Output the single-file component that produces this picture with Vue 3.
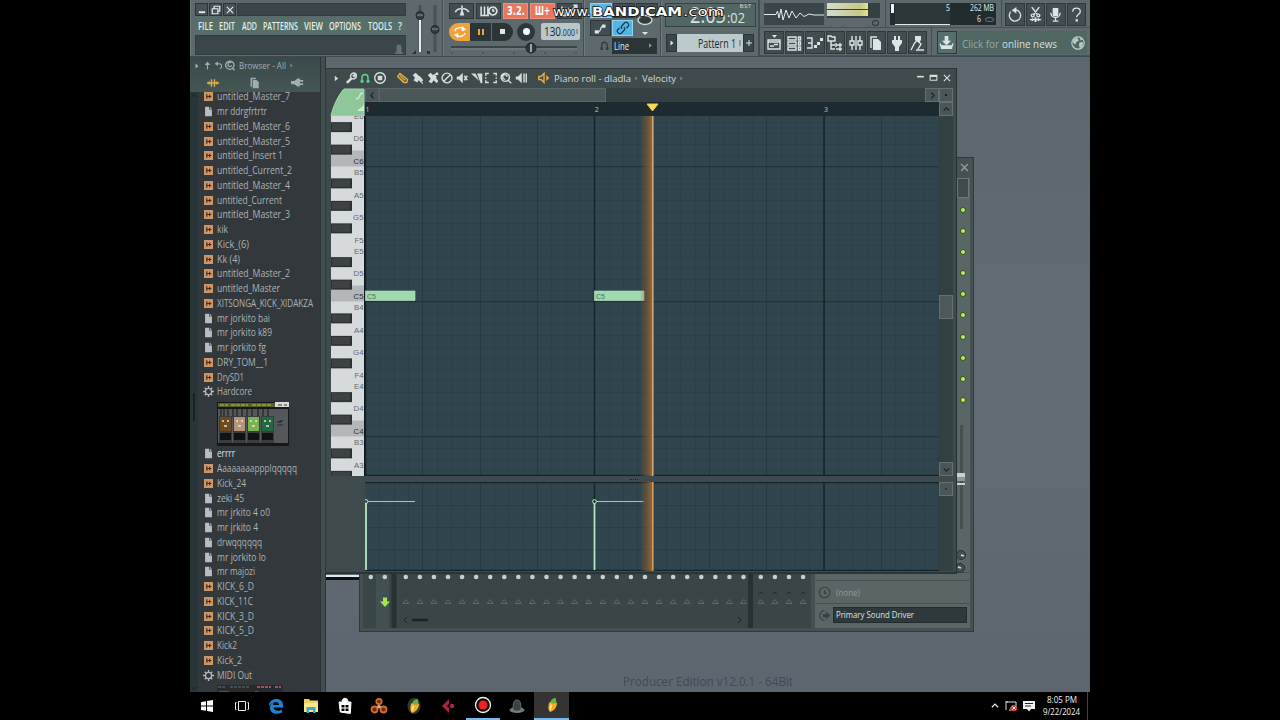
<template>
  <div class="stage">
    <div class="screen">
      <header class="toolbar">
        <section class="group menu-group">
          <div class="menu-box">
            <div class="title-row">
              <button v-for="n in ['min', 'restore', 'close']" :key="n" class="win-btn">
                <Icon :name="n" :size="10" />
              </button>
              <div class="title-fill"></div>
            </div>
            <nav class="menu">
              <Fit v-for="m in menus" :key="m.t" :text="m.t" :w="m.w" :h="14" class="menu-text" />
            </nav>
            <div class="hint"><Icon name="bin" :size="10" /></div>
          </div>
          <svg class="faders" width="30" height="57">
            <path d="M10 5V52M25 5V52" stroke="#465254" stroke-width="3" />
            <path d="M10 18V52" stroke="#e4eeee" stroke-width="2" />
            <g fill="#343d40" stroke="#20282a">
              <circle cx="10" cy="15.500" r="4" />
              <circle cx="25" cy="29.500" r="4" />
            </g>
            <path d="M7 15h6M22 29h6" stroke="#8b9697" />
            <path d="M2 54l4-4v4zM17 51h3v3h-3z" fill="#2b3537" />
          </svg>
        </section>

        <section class="group transport">
          <div class="row top">
            <div class="tb"><Icon name="metronome" :size="18" /></div>
            <div class="tb"><Icon name="wait" :size="18" /></div>
            <div class="tb red"><Fit text="3.2." :w="18" :h="14" class="seg" /></div>
            <div class="tb red"><Fit text="Ш+" :w="15" :h="14" class="seg" /></div>
            <div class="tb"><Icon name="steps" :size="18" /></div>
          </div>
          <div class="row play">
            <div class="mode"><Icon name="loop" :size="14" /></div>
            <div class="pause"><i></i><i></i></div>
            <div class="stop"><i></i></div>
            <div class="rec"><i></i></div>
            <div class="tempo">
              <Fit text="130" :w="17" :h="17" class="tempo-big" />
              <Fit text=".000" :w="14" :h="17" class="tempo-small" />
              <b></b>
            </div>
          </div>
          <svg width="132" height="14" class="pitch">
            <path d="M2 5H128" stroke="#38464a" stroke-width="2" />
            <path d="M2 7H128" stroke="#78888a" />
            <path d="M3 10v2M34 10v2M65 10v2M96 10v2M127 10v2" stroke="#3c494d" />
            <circle cx="82" cy="6" r="5" fill="#2c3639" stroke="#1d2527" />
            <path d="M82 2V10" stroke="#9aa7a9" stroke-width="2" />
          </svg>
        </section>

        <section class="group tools">
          <div class="row top">
            <div class="tb blue"></div>
            <div class="tb"></div>
            <div class="tb"></div>
          </div>
          <div class="row mid">
            <div class="tb"><Icon name="slide" :size="13" /></div>
            <div class="tb blue"><Icon name="link" :size="14" /></div>
            <svg width="22" height="22" class="knob">
              <ellipse cx="11" cy="3" rx="7" ry="4.500" fill="#313b3e" stroke="#c9d4d4" stroke-width="1.500" />
              <path d="M8 15h6l-3 3z" fill="#dfe7e7" />
            </svg>
          </div>
          <div class="row snap">
            <Icon name="magnet" :size="11" class="dim" />
            <div class="select">
              <Fit text="Line" :w="15" :h="14" class="select-text" />
              <Icon name="right" :size="7" class="dim-light" />
            </div>
          </div>
        </section>

        <section class="group clock-group">
          <div class="clock">
            <Fit text="2:05" :w="36" :h="22" class="clock-big" />
            <Fit text=":02" :w="18" :h="22" class="clock-mid" />
            <span class="bst">B:S:T</span>
          </div>
          <div class="pattern">
            <div class="pat-btn"><Icon name="right" :size="8" /></div>
            <div class="pat-name"><Fit text="Pattern 1" :w="38" :h="18" class="pat-text" /><b></b></div>
            <div class="pat-btn"><Icon name="plus" :size="8" /></div>
          </div>
        </section>

        <section class="right-side">
          <div class="row upper">
            <div class="sub scope-sub">
              <svg width="60" height="22" class="scope">
                <path
                  d="M0 11.500H12L13.500 8l1.500 7 2-9 2 11 3-10 3 8 3-7 4 7 4-5 4 3.500 5-2.500 5 1H60"
                  fill="none"
                  stroke="#e5ecec"
                />
              </svg>
              <div class="meter"><i></i><i></i><em></em></div>
            </div>
            <div class="sub cpu-sub">
              <div class="cpu">
                <i></i>
                <div class="cpu-graph"><Fit text="5" :w="4" :h="11" class="cpu-text" /></div>
                <div class="cpu-mem">
                  <Fit text="262 MB" :w="24" :h="11" class="cpu-text" />
                  <div><Fit text="6" :w="4" :h="11" class="cpu-text" /><s></s></div>
                </div>
              </div>
            </div>
            <div class="sub quick">
              <div v-for="n in ['undo', 'cut', 'mic', 'help']" :key="n" class="tb sq">
                <Icon :name="n" :size="15" />
              </div>
            </div>
          </div>
          <div class="row lower">
            <div class="sub panels">
              <div v-for="n in panelIcons" :key="n" class="tb sq"><Icon :name="n" :size="16" /></div>
            </div>
            <div class="sub news-sub">
              <div class="tb sq lit"><Icon name="download" :size="15" /></div>
              <div class="news">
                <Fit text="Click for" :w="37" :h="18" class="news-dim" />
                <Fit text="online news" :w="55" :h="18" class="news-lit" />
                <Icon name="globe" :size="14" />
              </div>
            </div>
          </div>
        </section>
      </header>

      <main class="workspace">
        <aside class="browser">
          <div class="browser-main">
            <div class="browser-head">
              <div class="crumbs">
                <Icon name="right" :size="8" />
                <Icon name="up" :size="9" />
                <Icon name="back" :size="9" />
                <Icon name="search" :size="11" />
                <Fit text="Browser - All" :w="47" :h="13" class="crumb-text" />
                <Icon name="right" :size="7" class="dim" />
              </div>
              <div class="tabs">
                <Icon name="wave" :size="12" class="gold" />
                <Icon name="pages" :size="12" />
                <Icon name="plug" :size="13" />
              </div>
            </div>
            <div class="browser-body">
              <div class="browser-scroll">
                <Icon name="chevUp" :size="8" />
                <i></i>
                <Icon name="chevDown" :size="8" />
              </div>
              <div class="files">
                <template v-for="(f, i) in files" :key="i">
                  <div class="file" :class="{ active: f.t === 'errrr' }">
                    <Icon :name="f.k" :size="f.k === 'audio' ? 9 : 11" :class="f.k" />
                    <Fit :text="f.t" :w="f.w" :h="15" class="file-text" />
                  </div>
                  <svg v-if="f.t === 'Hardcore'" class="thumb" width="72" height="44">
                    <rect width="72" height="44" fill="#161819" />
                    <rect x="1" y="1" width="57" height="4" fill="#56602b" />
                    <path d="M3 3h8m3 0h17m4 0h20" stroke="#b8bd42" stroke-dasharray="4 1" />
                    <rect x="58" y="0" width="14" height="5" fill="#d8dadb" />
                    <path d="M61 3h4m2 0h3" stroke="#333" />
                    <rect x="1" y="7" width="70" height="34" fill="#55585a" />
                    <path d="M4 7v8m3-8v8m4-8v8m5-8v8m4-8v8m5-8v8m5-8v8m5-8v8m6-8v8m5-8v8m5-8v8" stroke="#16191a" />
                    <g v-for="(c, j) in pedals" :key="c">
                      <rect :x="2 + j * 14" y="14" width="13" height="27" fill="#3a3d40" />
                      <rect :x="3 + j * 14" y="15" width="11" height="14" :fill="c" />
                      <path :d="`M${5 + j * 14} 19h2m3 0h2M${7 + j * 14} 24h3`" stroke="#eee3b0" stroke-width="1.500" />
                      <rect :x="3 + j * 14" y="31" width="11" height="7" fill="#101213" />
                    </g>
                    <path d="M60 20h4l2-2m-6 5h6" stroke="#2c2f31" />
                  </svg>
                </template>
                <svg class="thumb strip" width="66" height="8">
                  <rect width="66" height="8" fill="#272b2e" />
                  <path d="M1 2h8m4 0h20" stroke="#6d6c70" stroke-dasharray="3 1" />
                  <path d="M40 2h14m4 0h6" stroke="#a6505a" stroke-dasharray="3 1" stroke-width="2" />
                  <path d="M2 7h10m26 0h3" stroke="#84888a" />
                </svg>
              </div>
            </div>
          </div>
          <div class="browser-edge"></div>
        </aside>

        <div class="desktop">
          <span class="edition"><Fit text="Producer Edition v12.0.1 - 64Bit" :w="170" :h="18" class="edition-text" /></span>
          <div class="behind"></div>

          <div class="mixer">
            <div class="mixer-strip">
              <Icon name="close" :size="11" class="dim-light" />
              <div class="mixer-box"></div>
              <div class="leds"><i v-for="n in 10" :key="n"></i></div>
              <svg width="14" height="170" class="mixer-fader">
                <path d="M4.500 0V104" stroke="#46514f" stroke-width="3" />
                <rect x="0" y="48" width="8" height="4" fill="#c9d1d1" />
                <rect x="0" y="52" width="8" height="4" fill="#8e9999" />
                <rect x="0" y="58" width="8" height="2" fill="#c9d1d1" />
                <g fill="#455151" stroke="#283131">
                  <circle cx="4" cy="130" r="4.500" />
                  <circle cx="3" cy="143" r="4.500" />
                </g>
                <path d="M4 130l3 1M1 142l3 1" stroke="#d5dddd" stroke-width="1.500" />
              </svg>
            </div>
            <div class="mixer-bottom">
              <svg width="448" height="55" class="sends">
                <rect width="448" height="55" fill="#394546" />
                <rect x="13" width="13" height="55" fill="#435051" />
                <path d="M31 0V55M387.500 0V55" stroke="#273132" stroke-width="5" />
                <path d="M1 .5H448" stroke="#2b3536" />
                <circle v-for="x in sendDots" :key="'d' + x" :cx="x" cy="4" r="2.300" fill="#c7d0cf" />
                <path v-for="x in sendArrows" :key="'a' + x" :d="`M${x - 3} 30.500l3-4 3 4z`" fill="none" stroke="#5d6969" />
                <path v-for="x in sendEnd" :key="'e' + x" :d="`M${x - 2} 21l2-2 2 2`" fill="none" stroke="#202a2b" />
                <path d="M20 24.500h4v4h3l-5 5.500-5-5.500h3z" fill="#a9e44c" />
                <path d="M44 44l-3 3 3 3M375 44l3 3-3 3" fill="none" stroke="#1d2627" />
                <path d="M49 47H65" stroke="#1b2425" stroke-width="2.500" />
              </svg>
              <div class="outputs">
                <div class="out-none"><Icon name="clock" :size="13" /><Fit text="(none)" :w="24" :h="14" class="out-text" /></div>
                <div class="out-driver">
                  <Icon name="output" :size="13" />
                  <div><Fit text="Primary Sound Driver" :w="78" :h="13" class="driver-text" /></div>
                </div>
              </div>
            </div>
          </div>

          <div class="roll">
            <div class="roll-title">
              <Icon v-for="t in rollTools" :key="t.n" :name="t.n" :size="t.s || 12" :class="t.c" />
              <Fit text="Piano roll - dladla" :w="77" :h="15" class="roll-text first" />
              <Icon name="right" :size="7" class="dim" />
              <Fit text="Velocity" :w="34" :h="15" class="roll-text" />
              <Icon name="right" :size="7" class="dim" />
              <div class="roll-wins">
                <Icon name="min2" :size="9" />
                <Icon name="max" :size="9" />
                <Icon name="close" :size="10" />
              </div>
            </div>
            <div class="roll-body">
              <div class="keys-col">
                <svg width="35" height="28" class="corner">
                  <path d="M1 28C3 18 9 6 14 1H34V28z" fill="#8fc69a" stroke="#a8d9b1" />
                  <path d="M26 11c5 0 2-6 7-6" stroke="#c9efd0" stroke-width="1.300" fill="none" />
                  <path d="M27 23l7-6v6z" fill="#c9efd0" />
                </svg>
                <svg width="35" height="360">
                  <rect x="1" width="34" height="360" fill="#d6dadd" />
                  <rect v-for="k in cKeys" :key="'c' + k.y" x="1" :y="k.y - 16" width="33" height="16" fill="#b3b7ba" />
                  <g v-for="k in blackKeys" :key="k">
                    <rect x="1" :y="k - 5" width="21" height="10" fill="#2d3133" />
                    <rect x="2" :y="k - 4" width="18" height="7.500" fill="#3e4245" />
                  </g>
                  <text
                    v-for="k in whiteKeys"
                    :key="k.t"
                    x="33.500"
                    :y="k.y + 3"
                    class="key-label"
                    :class="{ strong: k.t[0] === 'C' }"
                  >{{ k.t }}</text>
                  <rect x="34" width="1" height="360" fill="#0f191d" />
                </svg>
              </div>
              <div class="lane-col">
                <div class="hscroll">
                  <div class="hs-btn"><Icon name="chevLeft" :size="9" /></div>
                  <div class="hs-thumb"></div>
                  <div class="hs-fill"></div>
                  <div class="hs-btn"><Icon name="chevRight" :size="9" /></div>
                </div>
                <div class="ruler">
                  <span v-for="n in 3" :key="n" :style="{ left: (n - 1) * 229.3 + 0.5 + 'px' }">{{ n }}</span>
                  <svg width="13" height="9" class="marker"><path d="M1 1H12L6.500 8z" fill="#ffdc55" stroke="#f6c944" /></svg>
                </div>
                <svg width="574" height="360" class="grid">
                  <rect width="574" height="360" fill="#30454d" />
                  <path v-for="x in stepLines" :key="'s' + x" :d="`M${x} 0V360`" stroke="#2c4048" />
                  <path v-for="y in rowLines" :key="'r' + y" :d="`M0 ${y}H574`" stroke="#2c4048" />
                  <path d="M0 50.500H574M0 185.500H574M0 320.500H574" stroke="#22343b" />
                  <path v-for="x in beatLines" :key="'b' + x" :d="`M${x} 0V360`" stroke="#243943" />
                  <path d="M.5 0V360M229.500 0V360M459 0V360M0 359.500H574" stroke="#14242b" stroke-width="1.500" />
                  <g v-for="x in [0, 229]" :key="'n' + x">
                    <rect :x="x + .5" y="175" width="49.500" height="9.500" fill="#a2d8b0" stroke="#b9e8c4" stroke-width=".6" />
                    <text :x="x + 2" y="182.500" class="note-label">C5</text>
                  </g>
                  <defs>
                    <linearGradient id="glow">
                      <stop offset="0" stop-color="#8d5c2e" stop-opacity="0" />
                      <stop offset=".6" stop-color="#8d5c2e" stop-opacity=".6" />
                      <stop offset="1" stop-color="#a36a38" stop-opacity=".9" />
                    </linearGradient>
                  </defs>
                  <rect x="275" width="12" height="360" fill="url(#glow)" />
                  <path d="M287.800 0V360" stroke="#cfa878" stroke-width="1.600" />
                </svg>
                <div class="split"><i></i></div>
                <svg width="574" height="89" class="grid">
                  <rect width="574" height="89" fill="#30454d" />
                  <path v-for="x in stepLines" :key="'vs' + x" :d="`M${x} 0V89`" stroke="#2a3e46" />
                  <path v-for="x in beatLines" :key="'vb' + x" :d="`M${x} 0V89`" stroke="#243943" />
                  <path d="M0 23.500H574M0 45.500H574M0 67.500H574" stroke="#293d45" />
                  <path d="M0 .5H574M0 88.500H574M229.500 0V89M459 0V89" stroke="#14242b" stroke-width="1.500" />
                  <g v-for="x in [1, 229.500]" :key="'v' + x" stroke="#b3e8c1" fill="none">
                    <path :d="`M${x} 21V88`" stroke-width="1.800" />
                    <path :d="`M${x + 2} 19.500H${x + 49}`" stroke="#a3cbb4" />
                    <circle :cx="x" cy="19.500" r="1.900" />
                  </g>
                  <rect x="275" width="12" height="89" fill="url(#glow)" />
                  <path d="M287.800 0V89" stroke="#cf9a5c" stroke-width="1.600" />
                </svg>
              </div>
              <div class="vscroll">
                <div class="vs-btn"><Icon name="dot" :size="8" /></div>
                <div class="vs-btn"><Icon name="chevUp" :size="9" /></div>
                <div class="vs-track"><i></i></div>
                <div class="vs-btn"><Icon name="chevDown" :size="9" /></div>
                <div class="vs-gap"></div>
                <div class="vs-btn"><Icon name="dot" :size="6" /></div>
                <div class="vs-rest"></div>
              </div>
            </div>
          </div>
        </div>
      </main>

      <footer class="taskbar">
        <div v-for="(a, i) in apps" :key="i" class="app" :class="{ running: a === 'record', current: i === apps.length - 1 }">
          <svg width="18" height="18" viewBox="0 0 18 18">
            <path v-if="a === 'win'" d="M3 5l5-.8v4.300H3zM9 4l6-1v5.500H9zM3 9.500h5v4.300L3 13zM9 9.500h6V15l-6-1z" fill="#fff" />
            <path v-if="a === 'tasks'" d="M5.500 4.500h7v9h-7zM3.500 5.500h-1v7h1M14.500 5.500h1v7h-1" fill="none" stroke="#e8e8e8" />
            <path v-if="a === 'edge'" d="M2 9C2 0 16 0 16 8v2.500H6.500c.5 4 5.500 4 8.500 2v3C9 18.500 2 16 3 9.500 3.500 7.500 5 6 7 5.500c-.7 1-.7 2-.7 2.500h5.700C12 4 6 3.500 2 9z" fill="#1c83d8" />
            <template v-if="a === 'folder'">
              <path d="M2 2h5l1 1.500h8V15H2z" fill="#f3cf5e" />
              <path d="M2 6h14v9H2z" fill="#fbe691" />
              <path d="M4.500 10h9v6H11v-3H7v3H4.500z" fill="#3fa9c4" />
            </template>
            <template v-if="a === 'store'">
              <path d="M3 5h12l-.7 11.500-10-1.500zM6 5c0-5 6-5 6 0" fill="#fff" stroke="#fff" />
              <path d="M5.500 8h3v2.500h-3zM9.500 8h3v2.500h-3zM5.500 11.500h3V14h-3zM9.500 11.500h3V14h-3z" fill="#000" />
            </template>
            <g v-if="a === 'rings'" fill="#6c2b0c" stroke="#cf6b2e" stroke-width="1.800">
              <circle cx="9" cy="4.500" r="2.700" /><circle cx="4.500" cy="12.500" r="3" /><circle cx="13.500" cy="12.500" r="3" />
              <path d="M9 7v4M6 11l3-2 3 2" />
              <circle cx="9" cy="9.700" r="1.800" fill="#bbb" stroke="none" />
            </g>
            <template v-if="a === 'fl'">
              <ellipse cx="9" cy="9" rx="6.500" ry="8" fill="#30383a" />
              <path d="M6 7c3-3 6-1 8 0 0 4-3 8-7 9-2-2-2-6-1-9z" fill="#f6ad25" />
              <path d="M8 8c2 1 1 4-1 7-1-2-1-5 1-7z" fill="#ffe076" />
              <path d="M8 7c-1-3 2-5 5-5-1 1 1 2 0 5-1 1-3 1-5 0z" fill="#6bb13d" />
            </template>
            <template v-if="a === 'cubase'">
              <path d="M10 2L3 9l7 7v-5L8 9l2-2z" fill="#a32742" />
              <circle cx="13" cy="9" r="2.300" fill="#a32742" />
            </template>
            <template v-if="a === 'record'">
              <circle cx="9" cy="9" r="7.500" fill="#150404" stroke="#f0f0f0" stroke-width="1.300" />
              <circle cx="9" cy="9" r="4.500" fill="#ee2222" />
            </template>
            <template v-if="a === 'hat'">
              <ellipse cx="9" cy="13" rx="7.500" ry="3" fill="#74797b" />
              <path d="M5 13C5 5 6 3 9 3s4 2 4 10c-2 1.500-6 1.500-8 0z" fill="#3d4244" stroke="#8c9193" stroke-width=".6" />
            </template>
          </svg>
        </div>
        <div class="tray">
          <Icon name="chevUp" :size="10" />
          <svg width="13" height="12">
            <path d="M2 2h9v6H5M1 1v9M1 2h2M4 10h3" fill="none" stroke="#ddd" />
            <circle cx="9" cy="8" r="3.200" fill="#d83a3a" />
            <path d="M7.500 6.500l3 3m0-3l-3 3" stroke="#fff" />
          </svg>
          <svg width="12" height="12">
            <path d="M0 1h12v8H8l-2 2.500L4 9H0z" fill="#f2f2f2" />
            <path d="M2 3.500h8M2 6h6" stroke="#222" />
          </svg>
          <div class="time">
            <Fit text="8:05 PM" :w="30" :h="12" class="time-text" />
            <Fit text="9/22/2024" :w="37" :h="12" class="time-text" />
          </div>
        </div>
        <div class="peek"></div>
      </footer>
    </div>

    <svg class="watermark" width="176" height="20">
      <text x="2" y="14" textLength="38" lengthAdjust="spacingAndGlyphs">www.</text>
      <text x="41" y="14" textLength="90" lengthAdjust="spacingAndGlyphs" class="wm-bold">BANDICAM</text>
      <text x="132" y="14" textLength="41" lengthAdjust="spacingAndGlyphs">.com</text>
    </svg>
  </div>
</template>

<script setup>
import { h } from 'vue';

// [stroked path, filled path] on a 16x16 box
const icons = {
  min: ['', 'M3 10h10v3H3z'],
  min2: ['', 'M2 5h12v3H2z'],
  max: ['M2 4h12v9H2zM2 6h12', ''],
  restore: ['M2 6h9v8H2zM5 6V2h9v8h-3', ''],
  close: ['M3 3l10 10M13 3L3 13', ''],
  bin: ['', 'M4 5l1-4h6l1 4v8h2v3H2v-3h2z'],
  metronome: ['M2 9C3 7 5 6 7 6M14 9C13 7 11 6 9 6M8 3v4', 'M8 5l2 7H6z'],
  wait: ['M1 4v8h7M4 4v8M7 4v8M11.500 4.500a3.500 3.500 0 1 1-.1 0M11.500 6v2h1.500', ''],
  steps: ['M1 4v8h8M4 5v7M7 5v7M9 8l5-5M11 3h3v3', ''],
  loop: ['M2 7C3 3 8 2 12 4M14 9c-1 4-6 5-10 3', 'M10 1l5 4-5 2zM6 15l-5-4 5-2z'],
  slide: ['M3 12h3c3 0 1-7 5-7h3', 'M1 10h5v4H1zM10 3h4v4h-4z'],
  link: ['M7 9C5 7 6 6 8 4l2-2c2-2 6 2 4 4l-2 2M9 7c2 2 1 3-1 5l-2 2c-2 2-6-2-4-4l2-2', ''],
  magnet: ['M4 14V7c0-5 8-5 8 0v7', 'M2 11h4v3H2zM10 11h4v3h-4z'],
  right: ['', 'M5 3l6 5-6 5z'],
  plus: ['M8 2v12M2 8h12', ''],
  undo: ['M4 5a6 6 0 1 0 5-2', 'M10 0v7L5 3.500z'],
  cut: ['M4 0l6 8M12 0L6 8M5 7.500a1.500 1.500 0 1 0 .1 0M11 7.500a1.500 1.500 0 1 0 .1 0M2 13.500h12', 'M7 11h2v5H7zM4 12h1.500v3H4zM10.500 12H12v3h-1.500z'],
  mic: ['M3 6c0 7 10 7 10 0M8 11v4M5 15h6', 'M5 1h6v9H5z'],
  help: ['M4 5c0-5 8-5 8 0 0 3-4 3-4 6', 'M7 13h2.500v2.500H7z'],
  playlist: ['M2 5h12v9H2zM2 7h12M4 11h4M8 9.500h4', 'M6 0h5L8.500 3z'],
  rack: ['M2 2h8v3H2zM2 7h8v3H2zM2 12h8v3H2zM12.500 2h2v3h-2zM12.500 7h2v3h-2zM12.500 12h2v3h-2z', ''],
  roll: ['M0 3h5v10H0M1 8h4', 'M7 10h3v3H7zM10 7h3v3h-3zM13 3h3v3h-3z'],
  tree: ['M1 1h3l1 1h3v4H1zM4 6v8h4M4 10h4M9 8v4M9 10h6M9 14h6M13 8v8', ''],
  mixer: ['M4 1v5M4 10v5M12 1v5M12 10v5M8 1v14M2 6h4v4H2zM10 6h4v4h-4z', ''],
  pages: ['M3 13V2h6', 'M5 4h5l3 3v8H5z'],
  plug: ['', 'M5 1h2v4h2V1h2v4h2v3l-3 4v4H6v-4L3 8V5h2z'],
  touch: ['M7 15h8M2 15l3-6 3-4M8 5l4 4-3 5', 'M6 1h6v4l-2 3-4-3z'],
  download: ['M1 9l2 5h10l2-5', 'M6 1h4v5h3l-5 5-5-5h3zM2 11h12v4H2z'],
  globe: ['M8 1a7 7 0 1 0 .1 0', 'M3 4l4-2 2 3-3 2-1 3-3-3zM10 7l4 0-1 5-3 2-1-4zM10 2l3 2-2 1z'],
  up: ['M8 15V4', 'M3 7l5-6 5 6z'],
  back: ['M4 5h5c6 0 6 7 1 9', 'M7 1v8L1 5z'],
  search: ['M7 1.500a6 6 0 1 0 .1 0M11 12l3 3M9 4a3 3 0 1 0 1 4', ''],
  wave: ['M0 8h16M3 6v4M6 3v10M10 3v10M13 6v4', ''],
  audio: ['', 'M0 0h16v16H0z'],
  doc: ['', 'M3 1h6v4h4v10H3zM10 1l3 3h-3z'],
  gear: ['M8 3.500a4.500 4.500 0 1 0 .1 0M8 0v3M8 13v3M0 8h3M13 8h3M2.500 2.500l2 2M11.500 11.500l2 2M13.500 2.500l-2 2M2.500 13.500l2-2', ''],
  chevUp: ['M3 10l5-5 5 5', ''],
  chevDown: ['M3 6l5 5 5-5', ''],
  chevLeft: ['M10 3L5 8l5 5', ''],
  chevRight: ['M6 3l5 5-5 5', ''],
  dot: ['', 'M6 6h4v4H6z'],
  clock: ['M8 1.500a6.500 6.500 0 1 0 .1 0M8 5v4h3', ''],
  output: ['M8 2a6 6 0 1 0 0 12', 'M6 6h4V3l5 5-5 5v-3H6z'],
  wrench: ['M2 14l6-6M3 15l6-6M8 8c-2-4 2-8 6-6l-3 3 1 1 3-2c1 4-3 7-7 4', ''],
  stamp: ['M8 1a7 7 0 1 0 .1 0', 'M5 5h6v6H5z'],
  pencil: ['M4 2l10 8-1 4-4 0L1 6zM4 5l7 6M2 7l7 6', ''],
  brush: ['', 'M1 4l4-3 4 4 2 1 4 5-2 2-1-1 3 3-1 1-5-5-2 3-5-3 2-3z'],
  paint: ['M10 4l4-3', 'M1 4l4-3 3 3 2-1 3 3-1 2 3 4-2 3-4-4-3 4-4-2 3-4zM12 1h3v3h-3z'],
  mute: ['M8 1.500a6.500 6.500 0 1 0 .1 0M4 12l8-8', ''],
  silent: ['M11 5l4 6M15 5l-4 6', 'M1 6h3l5-5v14l-5-5H1z'],
  slice: ['', 'M0 2h6l5 10zM8 2h7v13h-2z'],
  frame: ['M1 5V2h4M11 2h4v3M15 11v3h-4M5 14H1v-3M1 7v2M15 7v2', ''],
  zoom: ['M7 1.500a5.500 5.500 0 1 0 .1 0M11 11l4 4M9.500 6.500A3 3 0 1 0 7 9.500', ''],
  play: ['M12 2v12M15 2v12', 'M1 6h3l5-5v14l-5-5H1z'],
  speaker: ['M8 2L4 6H1v4h3l4 4z', 'M11 4l4 4-4 4z'],
};

const Icon = (props) => {
  const [line, solid] = icons[props.name];
  const { size } = props;
  return h('svg', { width: size, height: size, viewBox: '0 0 16 16', class: 'icon' }, [
    line && h('path', { d: line, fill: 'none', stroke: 'currentColor', 'stroke-width': size < 13 ? 1.9 : 1.4 }),
    solid && h('path', { d: solid, fill: 'currentColor' }),
    props.name === 'audio' && h('path', { d: 'M5 4v8M5 8h8M10 5v6', fill: 'none', stroke: '#3a2c22', 'stroke-width': 2 }),
  ]);
};
Icon.props = ['name', 'size'];

// narrow UI lettering squeezed to a fixed width
const Fit = (props) =>
  h('svg', { width: props.w, height: props.h, class: 'fit' }, [
    h('text', { x: 0, y: props.h * 0.76, textLength: props.w, lengthAdjust: 'spacingAndGlyphs' }, props.text),
  ]);
Fit.props = ['text', 'w', 'h'];

const menus = [
  { t: 'FILE', w: 15 },
  { t: 'EDIT', w: 16 },
  { t: 'ADD', w: 15 },
  { t: 'PATTERNS', w: 35 },
  { t: 'VIEW', w: 19 },
  { t: 'OPTIONS', w: 32 },
  { t: 'TOOLS', w: 24 },
  { t: '?', w: 4 },
];

const panelIcons = ['playlist', 'rack', 'roll', 'tree', 'mixer', 'pages', 'plug', 'touch'];

const files = [
  ['audio', 'untitled_Master_7', 73],
  ['doc', 'mr ddrgfrtrtr', 50],
  ['audio', 'untitled_Master_6', 73],
  ['audio', 'untitled_Master_5', 73],
  ['audio', 'untitled_Insert 1', 66],
  ['audio', 'untitled_Current_2', 75],
  ['audio', 'untitled_Master_4', 73],
  ['audio', 'untitled_Current', 65],
  ['audio', 'untitled_Master_3', 73],
  ['audio', 'kik', 11],
  ['audio', 'Kick_(6)', 32],
  ['audio', 'Kk (4)', 23],
  ['audio', 'untitled_Master_2', 73],
  ['audio', 'untitled_Master', 63],
  ['audio', 'XITSONGA_KICK_XIDAKZA', 96],
  ['doc', 'mr jorkito bai', 53],
  ['doc', 'mr jorkito k89', 55],
  ['doc', 'mr jorkito fg', 49],
  ['audio', 'DRY_TOM__1', 51],
  ['audio', 'DrySD1', 27],
  ['gear', 'Hardcore', 35],
  ['doc', 'errrr', 18],
  ['audio', 'Aaaaaaaappplqqqqq', 80],
  ['audio', 'Kick_24', 29],
  ['doc', 'zeki 45', 27],
  ['doc', 'mr jrkito 4 o0', 53],
  ['doc', 'mr jrkito 4', 41],
  ['doc', 'drwqqqqqq', 45],
  ['doc', 'mr jorkito lo', 49],
  ['doc', 'mr majozi', 38],
  ['audio', 'KICK_6_D', 37],
  ['audio', 'KICK_11C', 36],
  ['audio', 'KICK_3_D', 37],
  ['audio', 'KICK_5_D', 37],
  ['audio', 'Kick2', 20],
  ['audio', 'Kick_2', 25],
  ['gear', 'MIDI Out', 35],
].map(([k, t, w]) => ({ k, t, w }));

const pedals = ['#6b4a22', '#b5947b', '#79b251', '#1f6a45'];

const rollTools = [
  { n: 'right', s: 9 },
  { n: 'wrench', c: 'first-tool' },
  { n: 'magnet', c: 'green' },
  { n: 'stamp' },
  { n: 'pencil', c: 'gold gap' },
  { n: 'brush' },
  { n: 'paint' },
  { n: 'mute' },
  { n: 'silent' },
  { n: 'slice' },
  { n: 'frame' },
  { n: 'zoom' },
  { n: 'play' },
  { n: 'speaker', c: 'gold gap' },
];

// keyboard: 11.25px per semitone, bottom of C6 sits at 50.5
const names = ['C', '', 'D', '', 'E', 'F', '', 'G', '', 'A', '', 'B'];
const cKeys = [{ y: 50.5 }, { y: 185.5 }, { y: 320.5 }];
const whiteKeys = [];
const blackKeys = [];
for (let oct = 3; oct <= 6; oct++) {
  for (let i = 0; i < 12; i++) {
    const y = 50.5 + (6 - oct) * 135 - (i + 0.5) * 11.25;
    if (y < -6 || y > 364) continue;
    if (names[i]) whiteKeys.push({ t: names[i] + oct, y });
    else blackKeys.push(y);
  }
}

const range = (n, fn) => Array.from({ length: n }, (_, i) => fn(i));
const stepLines = range(40, (i) => Math.round((i + 1) * 14.33) + 0.5);
const beatLines = range(9, (i) => Math.round((i + 1) * 57.32) + 0.5);
const rowLines = range(32, (i) => Math.round(5.5 + i * 11.25) + 0.5);

const sendArrows = range(25, (i) => 42.8 + i * 14.07);
const sendEnd = range(4, (i) => 397.8 + i * 14.1);
const sendDots = [7.8, 21.8, ...sendArrows, ...sendEnd];
sendArrows.push(...sendEnd);

const apps = ['win', 'tasks', 'edge', 'folder', 'store', 'rings', 'fl', 'cubase', 'record', 'hat', 'fl'];
</script>

<style>
body {
  background: #000;
  overflow: hidden;
}
.icon,
.fit {
  display: block;
  flex: none;
}
.fit {
  overflow: visible;
}
.fit text {
  fill: currentColor;
}
</style>

<style scoped>
.stage {
  position: relative;
  width: 1280px;
  height: 720px;
  display: flex;
  justify-content: center;
  background: #000;
  font-family: "Open Sans", "Noto Sans", sans-serif;
}
.screen {
  width: 900px;
  height: 720px;
  display: flex;
  flex-direction: column;
  overflow: hidden;
}
.row {
  display: flex;
}

/* toolbar */
.toolbar {
  display: flex;
  box-sizing: border-box;
  height: 57px;
  background: #5d696c;
  border-bottom: 1px solid #3f494d;
  color: #e3eceb;
}
.group {
  box-sizing: border-box;
  border-right: 1px solid #424e51;
  border-left: 1px solid #6f7c7e;
  height: 56px;
}
.menu-group {
  width: 253px;
  display: flex;
  padding-left: 4px;
}
.menu-box {
  width: 211px;
  display: flex;
  flex-direction: column;
  padding-top: 3px;
  gap: 2px;
}
.title-row {
  display: flex;
  gap: 1px;
  height: 13px;
}
.win-btn {
  width: 13px;
  height: 13px;
  padding: 0;
  border: 1px solid #2b3437;
  background: #465255;
  color: #e3eceb;
  display: flex;
  align-items: center;
  justify-content: center;
}
.title-fill {
  flex: 1;
  background: #3a4649;
  border: 1px solid #323d40;
}
.menu {
  height: 15px;
  display: flex;
  align-items: center;
  gap: 6.300px;
  padding-left: 3px;
  background: #567069;
}
.menu-text {
  font-size: 11px;
  font-weight: 600;
}
.hint {
  height: 18px;
  background: #3a4649;
  border: 1px solid #323d40;
  color: #657274;
  display: flex;
  justify-content: flex-end;
  align-items: flex-end;
  padding-right: 1px;
}
.faders {
  margin-left: 4px;
}
.tb {
  box-sizing: border-box;
  border: 1px solid #2f393c;
  background: #414d50;
  color: #dbe5e5;
  display: flex;
  align-items: center;
  justify-content: center;
}
.red {
  background: #e8775f;
  border-color: #f1907b;
  color: #6c1c10;
}
.blue {
  background: #55b6e6;
  border-color: #8ad6f6;
  color: #12384a;
}
.seg {
  font-family: "DejaVu Sans", sans-serif;
  font-size: 12px;
  font-weight: 700;
  color: #fff;
}
.transport {
  width: 141px;
  padding: 3px 0 0 5px;
}
.transport .top {
  gap: 2px;
}
.transport .top .tb {
  width: 25px;
  height: 16px;
}
.play {
  margin-top: 3px;
  height: 19px;
  align-items: center;
}
.mode {
  width: 21px;
  height: 18px;
  border-radius: 9px 0 0 9px;
  background: #f2a23c;
  color: #fff;
  display: flex;
  align-items: center;
  justify-content: center;
}
.pause,
.stop {
  width: 21px;
  height: 18px;
  background: #2b3538;
  display: flex;
  gap: 2px;
  align-items: center;
  justify-content: center;
}
.pause i {
  width: 2px;
  height: 6px;
  background: #f2a23c;
}
.stop {
  width: 21px;
  margin-left: 1px;
  border-radius: 0 9px 9px 0;
}
.stop i {
  width: 5px;
  height: 5px;
  background: #dfe7e7;
}
.rec {
  width: 18px;
  height: 18px;
  margin-left: 4px;
  border-radius: 50%;
  background: #2e383b;
  display: flex;
  align-items: center;
  justify-content: center;
}
.rec i {
  width: 7px;
  height: 7px;
  border-radius: 50%;
  background: #f4f8f8;
}
.tempo {
  width: 39px;
  height: 17px;
  margin-left: 6px;
  border-radius: 2px;
  background: #b9c6cb;
  color: #1e282b;
  display: flex;
  align-items: center;
  padding-left: 3px;
  box-sizing: border-box;
}
.tempo b {
  width: 2px;
  height: 5px;
  margin-left: 1px;
  background: #8b9a9d;
}
.tempo-big {
  font-size: 13px;
}
.tempo-small {
  font-size: 9px;
}
.pitch {
  display: block;
  margin-top: 1px;
}
.tools {
  width: 77px;
  padding: 3px 0 0 5px;
}
.tools .top {
  gap: 1px;
}
.tools .top .tb {
  width: 22px;
  height: 15px;
}
.tools .mid {
  margin-top: 2px;
  gap: 1px;
  height: 17px;
}
.tools .mid .tb {
  width: 21px;
  height: 16px;
}
.knob {
  margin-top: -3px;
  overflow: visible;
}
.snap {
  align-items: center;
  height: 17px;
  margin-left: 9px;
  gap: 2px;
}
.dim {
  color: #6f7d7e;
}
.snap .dim {
  color: #313c3f;
}
.dim-light {
  color: #93a0a1;
}
.select {
  width: 45px;
  height: 16px;
  background: #2b3538;
  display: flex;
  align-items: center;
  justify-content: space-between;
  padding: 0 3px 0 2px;
  box-sizing: border-box;
}
.select-text {
  font-size: 10px;
}
.clock-group {
  width: 98px;
  padding: 3px 0 0 3px;
}
.clock {
  position: relative;
  width: 91px;
  height: 24px;
  background: #526764;
  border: 1px solid #35413f;
  display: flex;
  padding: 2px 0 0 24px;
  gap: 1px;
  box-sizing: border-box;
  color: #d9e3e2;
}
.clock-big {
  font-size: 21px;
}
.clock-mid {
  font-size: 15px;
}
.bst {
  position: absolute;
  right: 4px;
  top: -1px;
  font-size: 5px;
  line-height: 6px;
}
.pattern {
  display: flex;
  margin: 7px 0 0 1px;
}
.pat-btn {
  width: 11px;
  height: 18px;
  background: #3a4649;
  border: 1px solid #2b3538;
  box-sizing: border-box;
  display: flex;
  align-items: center;
  justify-content: center;
}
.pat-name {
  width: 66px;
  height: 18px;
  background: #bccacd;
  color: #1f2a2c;
  display: flex;
  justify-content: flex-end;
  align-items: center;
}
.pat-name b {
  width: 2px;
  height: 6px;
  margin: 0 2px 0 3px;
  background: #8b9a9d;
}
.pat-text {
  font-size: 12px;
}
.right-side {
  flex: 1;
}
.right-side .row {
  height: 28px;
}
.sub {
  display: flex;
  box-sizing: border-box;
  border-left: 1px solid #424e51;
  border-bottom: 1px solid #465255;
  padding-top: 3px;
}
.scope-sub {
  width: 126px;
  padding-left: 4px;
  gap: 3px;
}
.scope {
  background: #3a4649;
}
.meter {
  width: 53px;
  height: 15px;
  background: #354043;
  position: relative;
}
.meter i {
  display: block;
  width: 41px;
  height: 6px;
  margin-bottom: 1px;
  background: linear-gradient(90deg, #d5dccd, #c6c886 80%, #e4e58c);
}
.meter em {
  position: absolute;
  right: 1px;
  bottom: -8px;
  width: 5px;
  height: 4px;
  border: 1px solid #2c3639;
  border-radius: 50%;
}
.cpu-sub {
  width: 116px;
  padding-left: 4px;
}
.cpu {
  width: 106px;
  height: 22px;
  display: flex;
  background: #222c2f;
}
.cpu > i {
  width: 3px;
  height: 9px;
  margin: 1px;
  background: #edf2f2;
}
.cpu-graph {
  width: 55px;
  height: 21px;
  border-bottom: 1px solid #e2e8e8;
  background: #2c373a;
  display: flex;
  justify-content: flex-end;
}
.cpu-mem {
  width: 44px;
  display: flex;
  flex-direction: column;
  align-items: flex-end;
}
.cpu-mem div {
  display: flex;
  align-items: center;
  gap: 4px;
}
.cpu-mem s {
  width: 7px;
  height: 3px;
  border: 1px solid #66757a;
  border-radius: 50%;
}
.cpu-text {
  font-size: 8.500px;
}
.quick {
  flex: 1;
  padding-left: 3px;
  gap: 1px;
}
.tb.sq {
  width: 19.500px;
  height: 23px;
}
.panels {
  width: 172px;
  padding-left: 4px;
  gap: 1px;
}
.news-sub {
  flex: 1;
  padding-left: 5px;
  gap: 2px;
}
.tb.lit {
  background: #55706c;
}
.news {
  width: 128px;
  height: 23px;
  background: #506662;
  display: flex;
  align-items: center;
  padding-left: 3px;
  gap: 3px;
  box-sizing: border-box;
}
.news .icon {
  margin-left: 11px;
  color: #b9c9c7;
}
.news-dim {
  font-size: 10px;
  color: #94aaa7;
}
.news-lit {
  font-size: 10px;
  color: #d3e0df;
}

/* browser */
.workspace {
  flex: 1;
  min-height: 0;
  display: flex;
}
.browser {
  width: 136px;
  display: flex;
}
.browser-main {
  width: 130px;
  display: flex;
  flex-direction: column;
  background: #33383c;
}
.browser-head {
  height: 35px;
  flex: none;
  background: linear-gradient(#3a4849, #455655);
  color: #a1aeae;
}
.crumbs {
  display: flex;
  align-items: center;
  gap: 2px;
  height: 17px;
  padding-left: 3px;
}
.crumb-text {
  font-size: 9px;
  margin-left: 1px;
}
.tabs {
  display: flex;
  align-items: center;
  justify-content: space-between;
  padding: 0 16px 0 17px;
  height: 17px;
}
.tabs .icon:last-child {
  transform: rotate(90deg);
}
.gold {
  color: #e3ae45;
}
.browser-body {
  flex: 1;
  min-height: 0;
  display: flex;
}
.browser-scroll {
  width: 8px;
  background: #293639;
  color: #141d1f;
  display: flex;
  flex-direction: column;
  align-items: center;
  justify-content: space-between;
}
.browser-scroll i {
  width: 2px;
  height: 28px;
  margin-top: 30px;
  background: #172123;
}
.files {
  flex: 1;
  overflow: hidden;
  padding-left: 5px;
}
.file {
  display: flex;
  align-items: center;
  height: 14.750px;
  margin-top: -2.500px;
  margin-bottom: 2.500px;
  color: #abb2b5;
}
.file.active {
  color: #dde2e3;
}
.file-text {
  font-size: 11.500px;
  margin-left: 3px;
}
.file .audio {
  margin: 0 1px;
}
.audio {
  color: #cf9565;
}
.doc,
.gear {
  color: #b7bdc0;
}
.thumb {
  display: block;
  margin: 0 0 3.300px 14px;
}
.browser-edge {
  width: 6px;
  box-sizing: border-box;
  background: #414e50;
  border-left: 1px solid #2b3436;
  border-right: 1px solid #2c3538;
}

/* desktop windows */
.desktop {
  position: relative;
  flex: 1;
  background: linear-gradient(#5c666d, #636c75 50%, #5d666f);
}
.edition {
  position: absolute;
  left: 297px;
  top: 615px;
}
.edition-text {
  font-size: 12px;
  color: #414b52;
}
.behind {
  position: absolute;
  left: 0;
  top: 518px;
  width: 33px;
  height: 2px;
  background: #e3e8ea;
  border-bottom: 3px solid #0b1119;
}
.mixer {
  position: absolute;
  left: 33px;
  top: 100px;
  width: 615px;
  height: 475px;
  box-sizing: border-box;
  background: #455051;
  border: 1px solid #303a3c;
}
.mixer-strip {
  position: absolute;
  right: 3px;
  top: 0;
  width: 13px;
  height: 414px;
  background: linear-gradient(#455152 20px, #5a6665 20px);
}
.mixer-strip > .icon {
  margin: 4px 0 0 2px;
}
.mixer-box {
  width: 10px;
  height: 18px;
  margin: 5px 0 0;
  background: #414b4c;
  border: 1px solid #6c7878;
}
.leds {
  display: flex;
  flex-direction: column;
  gap: 15.100px;
  padding: 9px 0 0 3px;
}
.leds i {
  width: 6px;
  height: 6px;
  box-sizing: border-box;
  border: 1px solid #35510f;
  border-radius: 50%;
  background: #b8ef61;
}
.mixer-fader {
  display: block;
  margin-top: 22px;
}
.mixer-bottom {
  position: absolute;
  left: 3px;
  bottom: 3px;
  display: flex;
  gap: 4px;
}
.outputs {
  width: 155px;
  height: 55px;
  box-sizing: border-box;
  background: #5a6665;
  color: #364243;
  padding-top: 7px;
}
.out-none {
  height: 22px;
  border-top: 1px solid #475352;
  display: flex;
  align-items: center;
  padding-left: 3px;
  gap: 5px;
}
.out-text {
  font-size: 9px;
  color: #8f9a9a;
}
.out-driver {
  border-top: 1px solid #475352;
  height: 22px;
  display: flex;
  align-items: center;
  padding-left: 3px;
  gap: 2px;
}
.out-driver div {
  width: 134px;
  height: 16px;
  background: #2f393b;
  border: 1px solid #222b2d;
  padding-left: 2px;
  box-sizing: border-box;
}
.driver-text {
  font-size: 9px;
  color: #dbe3e3;
}
.roll {
  position: absolute;
  left: 0;
  top: 11px;
  width: 631px;
  height: 506px;
  box-sizing: border-box;
  background: #3f4a4c;
  border-top: 1px solid #2e3739;
  border-right: 1px solid #273032;
  border-bottom: 2px solid #2b3436;
}
.roll-title {
  display: flex;
  align-items: center;
  box-sizing: border-box;
  height: 19px;
  padding: 0 0 1px 6px;
  gap: 2.700px;
  color: #d5dcdc;
}
.first-tool {
  margin-left: 1px;
}
.green {
  color: #62d78c;
}
.gap {
  margin-left: 8.500px;
}
.roll-text {
  font-size: 9.500px;
}
.roll-text.first {
  margin-left: 1px;
}
.roll-title .dim {
  margin: 0 -.5px;
}
.roll-wins {
  margin-left: auto;
  display: flex;
  gap: 4px;
  padding-right: 4px;
}
.roll-body {
  display: flex;
  padding-left: 4px;
}
.keys-col {
  width: 35px;
}
.keys-col svg {
  display: block;
}
.key-label {
  font: 7.800px "Liberation Sans", sans-serif;
  text-anchor: end;
  fill: #63686b;
}
.key-label.strong {
  fill: #2c3032;
}
.lane-col {
  width: 574px;
}
.hscroll {
  display: flex;
  height: 14px;
  background: #343f41;
}
.hs-btn,
.vs-btn {
  width: 14px;
  height: 14px;
  box-sizing: border-box;
  border: 1px solid #647071;
  background: #4a5657;
  color: #172123;
  display: flex;
  align-items: center;
  justify-content: center;
}
.hs-btn:first-child {
  border-color: #556162;
}
.hs-thumb {
  width: 227px;
  box-sizing: border-box;
  background: #4b5758;
  border: 1px solid #5a6667;
}
.hs-fill {
  flex: 1;
}
.ruler {
  position: relative;
  height: 14px;
  background: #1d2a30;
  color: #b9c2c4;
  font-size: 7px;
  line-height: 15px;
}
.ruler span {
  position: absolute;
}
.marker {
  position: absolute;
  left: 281px;
  top: 1px;
}
.grid {
  display: block;
}
.note-label {
  font: 7px "Liberation Sans", sans-serif;
  fill: #4b7559;
}
.split {
  height: 6px;
  display: flex;
  justify-content: center;
}
.split i {
  width: 8px;
  border-top: 1px dotted #1d2729;
  margin-top: 3px;
  margin-right: 36px;
}
.vscroll {
  width: 14px;
  display: flex;
  flex-direction: column;
}
.vs-track {
  display: flow-root;
  height: 346px;
  background: #334041;
}
.vs-track i {
  display: block;
  width: 12px;
  height: 22px;
  margin-top: 179px;
  background: #4c5859;
  border: 1px solid #647071;
}
.vs-gap {
  height: 6px;
}
.vs-rest {
  height: 75px;
  background: #334041;
}

/* taskbar */
.taskbar {
  height: 28px;
  background: #000;
  display: flex;
  color: #f0f0f0;
}
.app {
  width: 34.450px;
  height: 28px;
  display: flex;
  align-items: center;
  justify-content: center;
  box-sizing: border-box;
}
.running {
  border-bottom: 2px solid #76b9ed;
}
.current {
  background: #343434;
  border-bottom: 2px solid #76b9ed;
}
.tray {
  margin-left: auto;
  display: flex;
  align-items: center;
  gap: 5px;
  padding-right: 7px;
}
.time {
  width: 37px;
  display: flex;
  flex-direction: column;
  align-items: center;
  margin-left: 3px;
  margin-top: -1px;
}
.time-text {
  font-size: 8.500px;
}
.peek {
  width: 2px;
  border-left: 1px solid #444;
}

.watermark {
  position: absolute;
  left: 551px;
  top: 2px;
  font-family: "DejaVu Sans", sans-serif;
  font-size: 13px;
}
.watermark text {
  fill: #fff;
  stroke: #111;
  stroke-width: 1.500px;
  paint-order: stroke;
}
.wm-bold {
  font-weight: 700;
}
</style>
